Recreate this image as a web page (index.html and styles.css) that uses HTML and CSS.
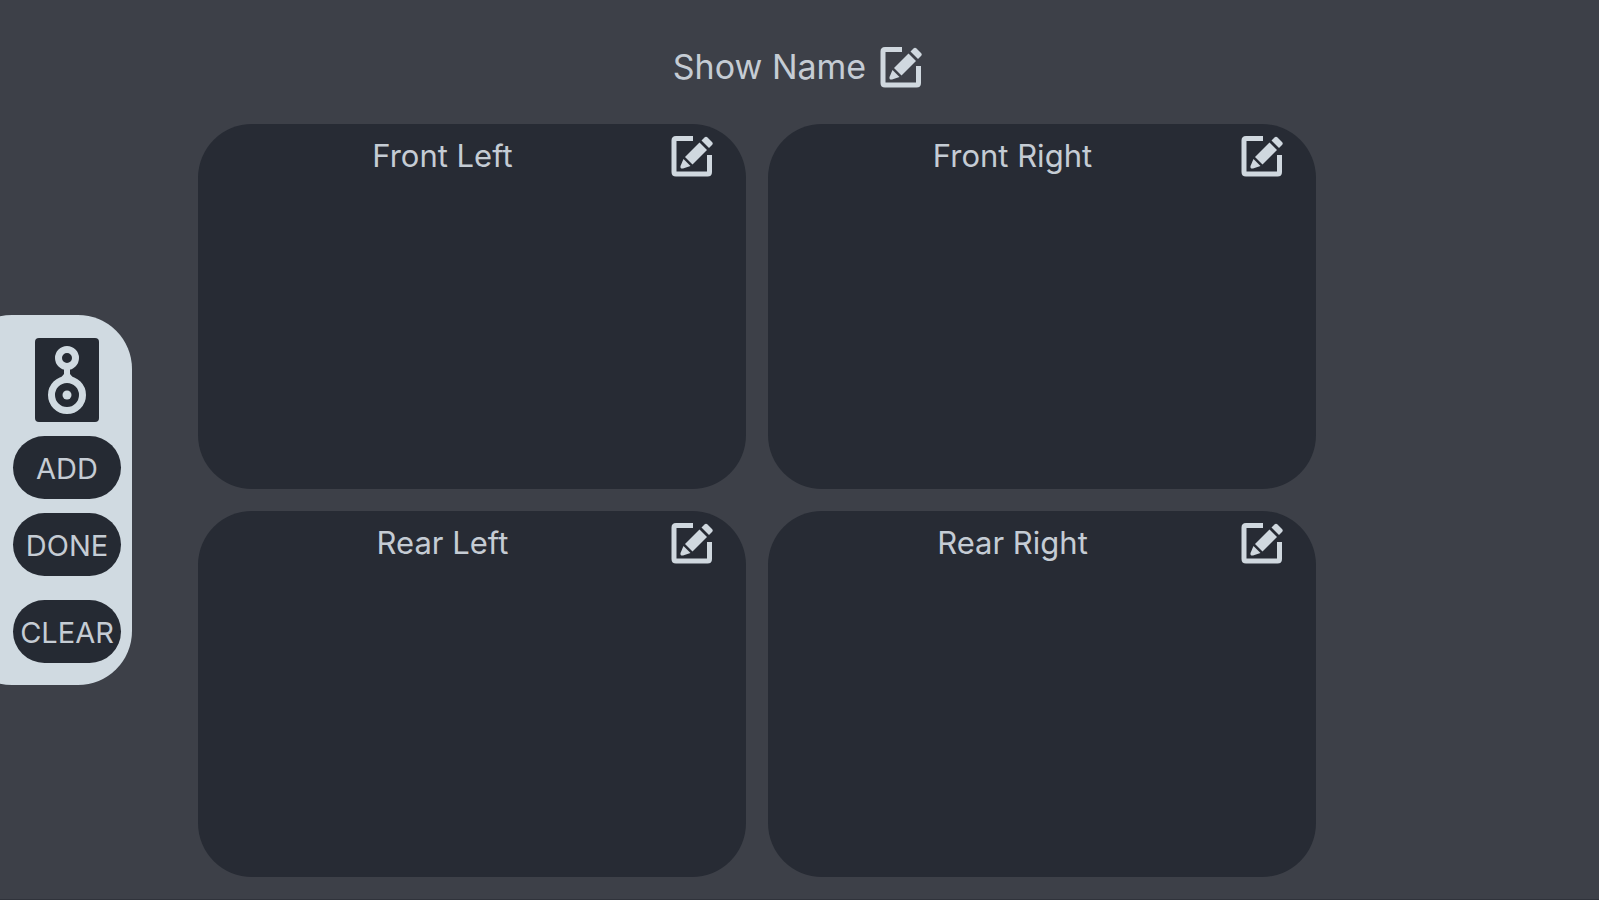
FILE: index.html
```html
<!DOCTYPE html>
<html lang="en">
<head>
<meta charset="utf-8">
<meta name="viewport" content="width=device-width, initial-scale=1">
<title>Show Name</title>
<link rel="stylesheet" href="styles.css">
</head>
<body class="page">
<svg class="sprite" aria-hidden="true">
  <symbol id="edit" viewBox="0 0 42 42">
    <path d="M22 3.500H5Q3 3.500 3 5.500V37Q3 39 5 39H36.500Q38.500 39 38.500 37V20" fill="none" stroke="currentColor" stroke-width="5"/>
    <path d="M14 22L28.500 7.500L36 15L21.500 29.500Z" fill="currentColor"/>
    <path d="M30.500 5.500L33.500 2.500Q35 1 36.500 2.500L41 7Q42.500 8.500 41 10L38 13Z" fill="currentColor"/>
    <path d="M12.500 24L19.500 31L12 33.500Q9 34 9.500 31Z" fill="currentColor"/>
  </symbol>
</svg>
<header class="show">
  <h1 class="show-name">Show Name</h1>
  <button class="edit" type="button" aria-label="Edit show name"><svg class="icon"><use href="#edit"/></svg></button>
</header>
<div class="stage">
  <aside class="tools">
    <svg class="speaker" viewBox="0 0 64 84" role="img" aria-label="Speaker">
      <rect width="64" height="84" rx="4" fill="#252a33"/>
      <g fill="none" stroke="#d0dae1">
        <circle cx="32" cy="20" r="8.500" stroke-width="7"/>
        <circle cx="32" cy="57" r="15.500" stroke-width="7"/>
      </g>
      <path d="M23 43L29 36V29H35V36L41 43Z" fill="#d0dae1"/>
      <circle cx="32" cy="57" r="4.500" fill="#d0dae1"/>
    </svg>
    <button class="tool" type="button">ADD</button>
    <button class="tool" type="button">DONE</button>
    <button class="tool tool-last" type="button">CLEAR</button>
  </aside>
  <main class="zones">
    <section class="zone">
      <h2 class="zone-name">Front Left</h2>
      <button class="edit" type="button" aria-label="Edit Front Left"><svg class="icon"><use href="#edit"/></svg></button>
    </section>
    <section class="zone">
      <h2 class="zone-name">Front Right</h2>
      <button class="edit" type="button" aria-label="Edit Front Right"><svg class="icon"><use href="#edit"/></svg></button>
    </section>
    <section class="zone">
      <h2 class="zone-name">Rear Left</h2>
      <button class="edit" type="button" aria-label="Edit Rear Left"><svg class="icon"><use href="#edit"/></svg></button>
    </section>
    <section class="zone">
      <h2 class="zone-name">Rear Right</h2>
      <button class="edit" type="button" aria-label="Edit Rear Right"><svg class="icon"><use href="#edit"/></svg></button>
    </section>
  </main>
</div>
</body>
</html>
```

FILE: styles.css
```css
* { box-sizing: border-box; }

.page {
  margin: 0;
  min-height: 100vh;
  background: #3d4048;
  border-bottom: 1px solid #30333b;
  color: #c5ccd4;
  font-family: Inter, "Liberation Sans", sans-serif;
  overflow-x: hidden;
}

.sprite { position: absolute; width: 0; height: 0; }

.show {
  display: flex;
  justify-content: center;
  align-items: center;
  gap: 14px;
  padding: 46px 4px 36px 0;
}

.show-name,
.zone-name {
  margin: 0;
  line-height: 42px;
  font-weight: 400;
}

.show-name { font-size: 34px; }

.zone-name {
  flex: 1;
  font-size: 31px;
  text-align: center;
}

.edit {
  display: block;
  width: 42px;
  height: 42px;
  padding: 0;
  border: 0;
  background: none;
  color: #d0d8df;
  cursor: pointer;
}

.icon { display: block; width: 100%; height: 100%; }

.stage {
  display: flex;
  align-items: center;
  gap: 66px;
  padding-right: 283px;
}

.tools {
  display: flex;
  flex-direction: column;
  align-items: center;
  gap: 14px;
  flex: none;
  width: 174px;
  margin-left: -42px;
  padding: 23px 10px 22px 54px;
  border-radius: 54px;
  background: #d0dae1;
}

.speaker { width: 64px; height: 84px; }

.tool {
  width: 108px;
  height: 63px;
  padding: 2px 0 0;
  border: 0;
  border-radius: 32px;
  background: #252a33;
  color: #c5ccd4;
  font: 400 29px/60px Inter, "Liberation Sans", sans-serif;
  cursor: pointer;
}

.tool-last { margin-top: 10px; }

.zones {
  display: grid;
  grid-template-columns: 1fr 1fr;
  gap: 22px;
  flex: 1;
}

.zone {
  display: flex;
  align-items: flex-start;
  aspect-ratio: 3 / 2;
  padding: 11px 33px 0 16px;
  border-radius: 54px;
  background: #272b34;
}
```
